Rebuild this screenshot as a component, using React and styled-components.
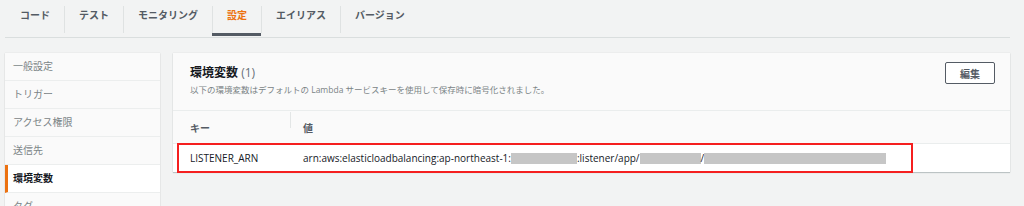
import React from "react";
import styled, { createGlobalStyle } from "styled-components";

const Global = createGlobalStyle`
  html, body { margin: 0; padding: 0; background: #f2f3f3; overflow: hidden; }
  body { font-family: "Open Sans", "Noto Sans CJK JP", sans-serif; color: #16191f; }
  #root { height: 206px; overflow: hidden; }
`;

const TabBar = styled.div`
  display: flex;
  height: 37px;
  margin: 0 14px 0 5px;
  border-bottom: 1px solid #dadede;
`;

const Tab = styled.div`
  position: relative;
  padding: 0 14px 0 15px;
  line-height: 31px;
  font-size: 10px;
  font-weight: 700;
  color: ${(p) => (p.$active ? "#ec7211" : "#545b64")};
  white-space: nowrap;
  &::before {
    content: "";
    display: ${(p) => (p.$first ? "none" : "block")};
    position: absolute;
    left: 0;
    top: 6px;
    bottom: 4px;
    width: 1px;
    background: #dfe2e2;
  }
  &::after {
    content: "";
    display: ${(p) => (p.$active ? "block" : "none")};
    position: absolute;
    left: 0;
    right: 0;
    bottom: 1px;
    height: 3px;
    background: #545b64;
  }
`;

const Body = styled.div`
  display: flex;
  align-items: flex-start;
  gap: 13px;
  padding: 15px 14px 0 5px;
`;

const Nav = styled.div`
  width: 155px;
  flex: none;
  background: #fafafa;
  box-shadow: 0 1px 1px rgba(0, 28, 36, 0.15), 0 0 1px rgba(0, 28, 36, 0.15);
`;

const NavItem = styled.div`
  height: 27px;
  line-height: 27px;
  border-bottom: 1px solid #eceeee;
  padding-left: ${(p) => (p.$active ? "5px" : "8px")};
  border-left: ${(p) => (p.$active ? "3px solid #ec7211" : "0")};
  background: ${(p) => (p.$active ? "#ffffff" : "transparent")};
  font-size: 10px;
  font-weight: ${(p) => (p.$active ? 700 : 400)};
  color: ${(p) => (p.$active ? "#16191f" : "#7a8486")};
`;

const Panel = styled.div`
  flex: 1;
  background: #fafafa;
  box-shadow: 0 1px 1px rgba(0, 28, 36, 0.2), 0 0 1px rgba(0, 28, 36, 0.15);
`;

const PanelHeader = styled.div`
  display: flex;
  justify-content: space-between;
  align-items: flex-start;
  padding: 9px 15px 0 17px;
  height: 48px;
  border-bottom: 1px solid #eaeded;
`;

const TitleBlock = styled.div`
  padding-top: 3px;
`;

const Title = styled.div`
  font-size: 12px;
  line-height: 16px;
  font-weight: 700;
  color: #16191f;
`;

const Count = styled.span`
  font-weight: 400;
  color: #687078;
`;

const Description = styled.div`
  margin-top: 3px;
  font-size: 8.5px;
  line-height: 12px;
  color: #7a8486;
`;

const Button = styled.button`
  width: 50px;
  height: 22px;
  background: #ffffff;
  border: 1px solid #545b64;
  border-radius: 2px;
  font-family: "Noto Sans CJK JP", sans-serif;
  font-size: 10px;
  font-weight: 700;
  color: #545b64;
  padding: 0;
`;

const Row = styled.div`
  position: relative;
  display: grid;
  grid-template-columns: 117px 1fr;
  height: ${(p) => (p.$head ? "32px" : "28px")};
  align-items: center;
  background: ${(p) => (p.$head ? "#fafafa" : "#ffffff")};
  border-bottom: ${(p) => (p.$head ? "1px solid #eaeded" : "0")};
`;

const Cell = styled.div`
  position: relative;
  padding-left: ${(p) => (p.$first ? "17px" : "13px")};
  font-size: 10px;
  font-weight: ${(p) => (p.$head ? 700 : 400)};
  color: ${(p) => (p.$head ? "#545b64" : "#16191f")};
  white-space: nowrap;
  &::before {
    content: "";
    display: ${(p) => (p.$head && !p.$first ? "block" : "none")};
    position: absolute;
    left: 0;
    top: -8px;
    height: 16px;
    width: 1px;
    background: #e3e6e6;
  }
`;

const Redacted = styled.span`
  display: inline-block;
  width: ${(p) => p.$w}px;
  height: 11px;
  background: #c6c6c6;
  vertical-align: -2px;
`;

const Highlight = styled.div`
  position: absolute;
  left: 4px;
  top: -1px;
  width: 736px;
  height: 30px;
  box-sizing: border-box;
  border: 2px solid #f51f1f;
  pointer-events: none;
`;

const tabs = ["コード", "テスト", "モニタリング", "設定", "エイリアス", "バージョン"];
const navItems = ["一般設定", "トリガー", "アクセス権限", "送信先", "環境変数", "タグ"];

export default function App() {
  return (
    <>
      <Global />
      <TabBar>
        {tabs.map((t, i) => (
          <Tab key={t} $first={i === 0} $active={t === "設定"}>
            {t}
          </Tab>
        ))}
      </TabBar>
      <Body>
        <Nav>
          {navItems.map((n) => (
            <NavItem key={n} $active={n === "環境変数"}>
              {n}
            </NavItem>
          ))}
        </Nav>
        <Panel>
          <PanelHeader>
            <TitleBlock>
              <Title>
                環境変数 <Count>(1)</Count>
              </Title>
              <Description>
                以下の環境変数はデフォルトの Lambda サービスキーを使用して保存時に暗号化されました。
              </Description>
            </TitleBlock>
            <Button>編集</Button>
          </PanelHeader>
          <Row $head>
            <Cell $head $first>キー</Cell>
            <Cell $head>値</Cell>
          </Row>
          <Row>
            <Cell $first>LISTENER_ARN</Cell>
            <Cell>
              arn:aws:elasticloadbalancing:ap-northeast-1:<Redacted $w={66} />:listener/app/
              <Redacted $w={61} />/<Redacted $w={182} />
            </Cell>
            <Highlight />
          </Row>
        </Panel>
      </Body>
    </>
  );
}
